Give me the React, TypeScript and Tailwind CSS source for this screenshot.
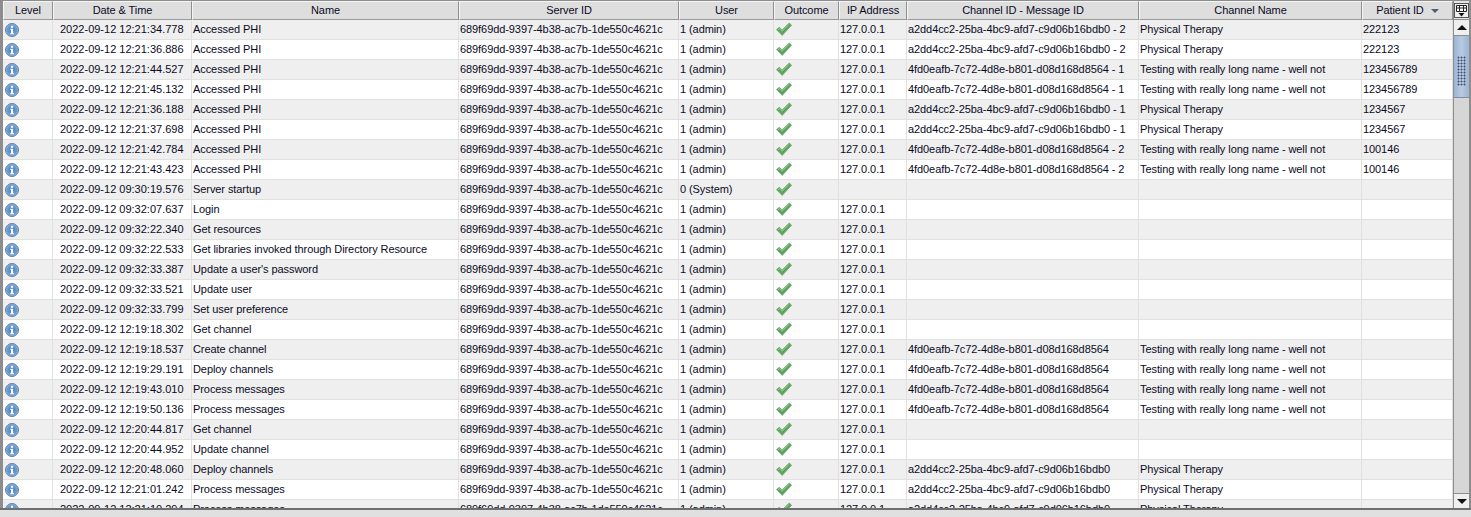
import React from 'react';

const columns = [
  { name: 'Level', cls: 'w-[50px]' },
  { name: 'Date & Time', cls: 'w-[139px]' },
  { name: 'Name', cls: 'w-[267px]' },
  { name: 'Server ID', cls: 'w-[220px]' },
  { name: 'User', cls: 'w-[95px]' },
  { name: 'Outcome', cls: 'w-[65px]' },
  { name: 'IP Address', cls: 'w-[68px]' },
  { name: 'Channel ID - Message ID', cls: 'w-[232px]' },
  { name: 'Channel Name', cls: 'w-[223px]' },
  { name: 'Patient ID', cls: 'w-[91px]' },
];

const SERVER = '689f69dd-9397-4b38-ac7b-1de550c4621c';
const CH_A = 'a2dd4cc2-25ba-4bc9-afd7-c9d06b16bdb0';
const CH_B = '4fd0eafb-7c72-4d8e-b801-d08d168d8564';
const PT = 'Physical Therapy';
const LONG = 'Testing with really long name - well not';

const rows: string[][] = [
  ['12:21:34.778', 'Accessed PHI', '1 (admin)', CH_A + ' - 2', PT, '222123'],
  ['12:21:36.886', 'Accessed PHI', '1 (admin)', CH_A + ' - 2', PT, '222123'],
  ['12:21:44.527', 'Accessed PHI', '1 (admin)', CH_B + ' - 1', LONG, '123456789'],
  ['12:21:45.132', 'Accessed PHI', '1 (admin)', CH_B + ' - 1', LONG, '123456789'],
  ['12:21:36.188', 'Accessed PHI', '1 (admin)', CH_A + ' - 1', PT, '1234567'],
  ['12:21:37.698', 'Accessed PHI', '1 (admin)', CH_A + ' - 1', PT, '1234567'],
  ['12:21:42.784', 'Accessed PHI', '1 (admin)', CH_B + ' - 2', LONG, '100146'],
  ['12:21:43.423', 'Accessed PHI', '1 (admin)', CH_B + ' - 2', LONG, '100146'],
  ['09:30:19.576', 'Server startup', '0 (System)', '', '', ''],
  ['09:32:07.637', 'Login', '1 (admin)', '', '', ''],
  ['09:32:22.340', 'Get resources', '1 (admin)', '', '', ''],
  ['09:32:22.533', 'Get libraries invoked through Directory Resource', '1 (admin)', '', '', ''],
  ['09:32:33.387', "Update a user's password", '1 (admin)', '', '', ''],
  ['09:32:33.521', 'Update user', '1 (admin)', '', '', ''],
  ['09:32:33.799', 'Set user preference', '1 (admin)', '', '', ''],
  ['12:19:18.302', 'Get channel', '1 (admin)', '', '', ''],
  ['12:19:18.537', 'Create channel', '1 (admin)', CH_B, LONG, ''],
  ['12:19:29.191', 'Deploy channels', '1 (admin)', CH_B, LONG, ''],
  ['12:19:43.010', 'Process messages', '1 (admin)', CH_B, LONG, ''],
  ['12:19:50.136', 'Process messages', '1 (admin)', CH_B, LONG, ''],
  ['12:20:44.817', 'Get channel', '1 (admin)', '', '', ''],
  ['12:20:44.952', 'Update channel', '1 (admin)', '', '', ''],
  ['12:20:48.060', 'Deploy channels', '1 (admin)', CH_A, PT, ''],
  ['12:21:01.242', 'Process messages', '1 (admin)', CH_A, PT, ''],
  ['12:21:10.294', 'Process messages', '1 (admin)', CH_A, PT, ''],
];

const InfoIcon = () => (
  <svg width="16" height="16" viewBox="0 0 16 16">
    <defs>
      <radialGradient id="info" cx="50%" cy="50%" r="55%">
        <stop offset="0%" stopColor="#3f7cc0" />
        <stop offset="70%" stopColor="#6f9fd2" />
        <stop offset="100%" stopColor="#b4cde8" />
      </radialGradient>
    </defs>
    <circle cx="8" cy="8" r="6.5" fill="url(#info)" stroke="#5f7fa6" strokeWidth="1" />
    <rect x="6.900" y="3.8" width="2.2" height="2" fill="#fff" />
    <path d="M6.4 6.8h2.7v4.3h.7v1.1H6.4v-1.1h.6V7.900h-.6z" fill="#fff" />
  </svg>
);

const CheckIcon = () => (
  <svg width="18" height="16" viewBox="0 0 18 16" className="-mt-[1px]">
    <path d="M1.5 8.6 4.3 6.2 7 9 14.2 2 16.6 4.2 7.2 14.4z" fill="#5aa55a" stroke="#7aa67a" strokeWidth="0.8" strokeLinejoin="round" />
    <path d="M3 8.6 4.4 7.6 7 10.2 14.2 3.4" fill="none" stroke="#98cf98" strokeWidth="1" />
  </svg>
);

function Cell({ w, children, pad = 'pl-[1px]' }: { w: string; children?: React.ReactNode; pad?: string }) {
  return (
    <div className={`${w} ${pad} shrink-0 h-full flex items-center border-r border-[#e0e0e0] overflow-hidden whitespace-nowrap`}>
      {children}
    </div>
  );
}

export default function App() {
  return (
    <div className="w-[1471px] h-[517px] overflow-hidden bg-[#e4e4e4] flex flex-col text-[11px] tracking-[-0.08px] text-[#0a0a1e] font-['Liberation_Sans',Arial,sans-serif]">
      <div className="h-[508px] flex border-t border-[#8d8d8d] border-l-[3px] border-l-[#8d8d8d]">
        <div className="w-[1450px] shrink-0 flex flex-col overflow-hidden">
          <div className="h-[19px] shrink-0 flex bg-[#dedede]">
            {columns.map((c) => (
              <div
                key={c.name}
                className={`${c.cls} shrink-0 flex items-center justify-center gap-[7px] border-r border-r-[#8f8f8f] border-b border-b-[#9a9a9a] border-l border-l-[#f5f5f5] border-t border-t-[#f5f5f5]`}
              >
                <span>{c.name}</span>
                {c.name === 'Patient ID' && (
                  <span className="w-0 h-0 border-x-[4px] border-x-transparent border-t-[4px] border-t-[#4b5f75]" />
                )}
              </div>
            ))}
          </div>
          {rows.map((r, i) => (
            <div key={i} className={`h-[20px] shrink-0 flex border-b border-[#e0e0e0] ${i % 2 === 0 ? 'bg-[#efefef]' : 'bg-white'}`}>
              <Cell w="w-[50px]"><InfoIcon /></Cell>
              <Cell w="w-[139px]" pad="pl-[7px] tracking-normal">2022-09-12 {r[0]}</Cell>
              <Cell w="w-[267px]">{r[1]}</Cell>
              <Cell w="w-[220px]">{SERVER}</Cell>
              <Cell w="w-[95px]">{r[2]}</Cell>
              <Cell w="w-[65px]"><CheckIcon /></Cell>
              <Cell w="w-[68px]">{r[1] === 'Server startup' ? '' : '127.0.0.1'}</Cell>
              <Cell w="w-[232px]">{r[3]}</Cell>
              <Cell w="w-[223px]">{r[4]}</Cell>
              <Cell w="w-[91px]">{r[5]}</Cell>
            </div>
          ))}
        </div>
        {/* Scroll bar */}
        <div className="w-[16px] shrink-0 flex flex-col bg-[#d6d6d6] border-l border-[#8d8d8d]">
          <div className="h-[19px] shrink-0 bg-[#e4e4e4] flex pt-[2px] border-b border-[#8d8d8d]">
            <div className="w-[15px] h-[15px] flex items-center justify-center bg-[#efefef] border border-[#555]">
              <svg width="11" height="12" viewBox="0 0 11 12">
                <path d="M.5.5h10v6h-10zM.5 3h10M3.5.5v6M7.5.5v6" fill="#fff" stroke="#222" strokeWidth="1" />
                <path d="M2.500 8h6L5.500 11.500z" fill="#111" />
              </svg>
            </div>
          </div>
          <div className="h-[16px] shrink-0 flex items-center justify-center bg-[#efefef] border-b border-[#8d8d8d]">
            <span className="w-0 h-0 border-x-[5px] border-x-transparent border-b-[5px] border-b-[#111]" />
          </div>
          <div className="h-[62px] shrink-0 flex justify-center pt-[20px] bg-gradient-to-r from-[#9db5d2] via-[#b6cae2] to-[#9db5d2] border-b border-[#7d8ea6]">
            <div className="w-[9px] h-[30px] bg-[radial-gradient(#3f5575_0.9px,transparent_1.1px)] bg-[length:3px_3px]" />
          </div>
          <div className="flex-1" />
          <div className="h-[15px] shrink-0 flex items-center justify-center bg-[#efefef] border-t border-[#8d8d8d]">
            <span className="w-0 h-0 border-x-[5px] border-x-transparent border-t-[5px] border-t-[#111]" />
          </div>
        </div>
        <div className="w-[2px] shrink-0 bg-[#8d8d8d]" />
      </div>
      <div className="h-[2px] shrink-0 bg-[#6f6f6f]" />
      <div className="flex-1 bg-[#e0e0e0]" />
    </div>
  );
}
